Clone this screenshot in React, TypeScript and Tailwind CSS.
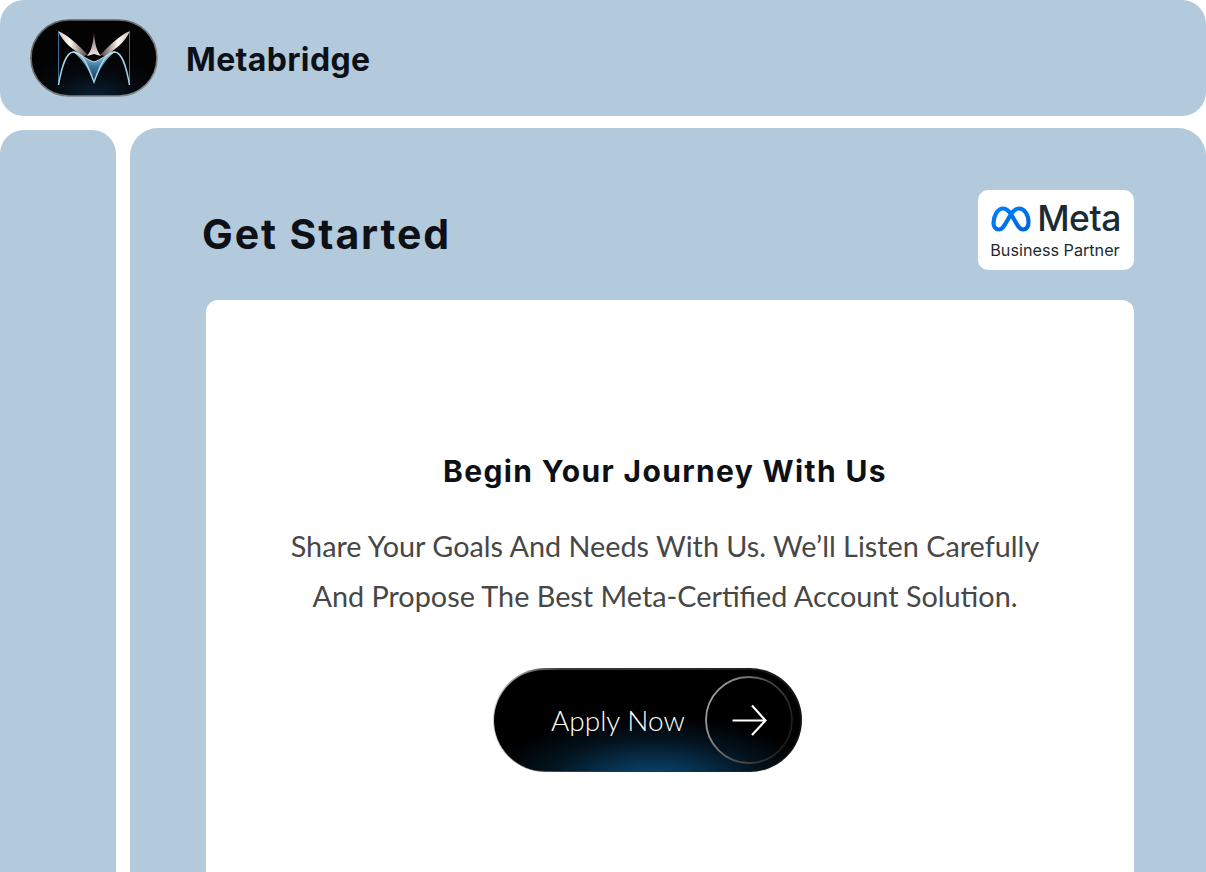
const LogoMark = () => (
  <svg viewBox="0 0 128 78" className="h-[78px] w-[128px]">
    <defs>
      <radialGradient id="logoFill" cx="0.5" cy="1.05" r="0.6">
        <stop offset="0" stopColor="#0b2238" />
        <stop offset="0.6" stopColor="#05090e" />
        <stop offset="1" stopColor="#030304" />
      </radialGradient>
      <linearGradient id="logoRim" x1="0" y1="0" x2="1" y2="1">
        <stop offset="0" stopColor="#5c5c5c" />
        <stop offset="1" stopColor="#858c92" />
      </linearGradient>
      <linearGradient id="wingLeft" x1="0" y1="0" x2="1" y2="0">
        <stop offset="0" stopColor="#cfc4c0" />
        <stop offset="0.4" stopColor="#fff6f0" />
        <stop offset="1" stopColor="#4a3a36" />
      </linearGradient>
      <linearGradient id="wingRight" x1="1" y1="0" x2="0" y2="0">
        <stop offset="0" stopColor="#cfc4c0" />
        <stop offset="0.4" stopColor="#fff6f0" />
        <stop offset="1" stopColor="#4a3a36" />
      </linearGradient>
      <linearGradient id="spike" x1="0" y1="0" x2="0" y2="1">
        <stop offset="0" stopColor="#6f6360" />
        <stop offset="1" stopColor="#f4ece8" />
      </linearGradient>
      <linearGradient id="belly" x1="0" y1="0" x2="0" y2="1">
        <stop offset="0" stopColor="#a6d0e6" />
        <stop offset="0.5" stopColor="#3a7599" />
        <stop offset="1" stopColor="#0f3454" />
      </linearGradient>
      <filter id="soft" x="-20%" y="-20%" width="140%" height="140%">
        <feGaussianBlur stdDeviation="0.7" />
      </filter>
    </defs>
    <rect x="1" y="1" width="126" height="76" rx="38" fill="url(#logoFill)" stroke="url(#logoRim)" strokeWidth="1.6" />
    <path d="M28.500 13 L28.500 66" stroke="#3f7196" strokeWidth="1" fill="none" />
    <path d="M99.500 13 L99.500 66" stroke="#3f7196" strokeWidth="1" fill="none" />
    <g filter="url(#soft)">
      <path d="M28 12 C38 16 48 26 58 36 L53 37 C43 31 33 23 28 12 Z" fill="url(#wingLeft)" />
      <path d="M100 12 C90 16 80 26 70 36 L75 37 C85 31 95 23 100 12 Z" fill="url(#wingRight)" />
      <path d="M64 14 C65 24 66 31 71 37 L64 35 L57 37 C62 31 63 24 64 14 Z" fill="url(#spike)" />
    </g>
    <path d="M43 33 C50 34 57 41 64 43 C71 41 78 34 85 33 C77 38 70 50 64 63 C58 50 51 38 43 33 Z" fill="url(#belly)" />
    <path
      d="M28.500 66 C32 46 36 34 43 33 C51 32 57 44 64 63 C71 44 77 32 85 33 C92 34 96 46 99.500 66"
      stroke="#a9d6ea"
      strokeWidth="1.400"
      fill="none"
    />
    <path d="M43 33 C50 34 57 41 64 43 C71 41 78 34 85 33" stroke="#c9e6f3" strokeWidth="1" fill="none" />
  </svg>
);

const MetaBadge = () => (
  <div className="flex h-[80px] w-[156px] flex-col items-center justify-center rounded-[10px] bg-white">
    <div className="flex items-center gap-[6px]">
      <svg viewBox="0 0 40 26" className="h-[26px] w-[40px]" fill="none">
        <defs>
          <linearGradient id="metaBlue" x1="0" y1="0" x2="1" y2="1">
            <stop offset="0" stopColor="#0082fb" />
            <stop offset="1" stopColor="#0064e0" />
          </linearGradient>
        </defs>
        <path
          d="M2.500 17C2.500 10 6.500 2.500 12 2.500C17 2.500 20 8 24 15C27 20.500 29 23.500 32 23.500C35.500 23.500 37.500 20.500 37.500 16C37.500 9 33.500 2.500 28 2.500C23 2.500 20 8 16 15C13 20.500 11 23.500 8 23.500C4.500 23.500 2.500 21 2.500 17Z"
          stroke="url(#metaBlue)"
          strokeWidth="4.200"
        />
      </svg>
      <span className="text-[35.500px] leading-[34px] font-medium tracking-[-0.5px] text-[#1c2b33]">Meta</span>
    </div>
    <span className="mt-[5px] mr-[2px] text-[16.200px] leading-[18px] text-[#1c2b33]">Business Partner</span>
  </div>
);

const ArrowCircle = () => (
  <svg viewBox="0 0 88 88" className="size-[88px]" fill="none">
    <defs>
      <linearGradient id="ringStroke" x1="0" y1="0.3" x2="1" y2="0.7">
        <stop offset="0" stopColor="#a6a6a6" />
        <stop offset="0.55" stopColor="#4a4a4a" />
        <stop offset="1" stopColor="#181818" />
      </linearGradient>
    </defs>
    <circle cx="44" cy="44" r="43" stroke="url(#ringStroke)" strokeWidth="1.800" />
    <path d="M27.500 44.500H60M47 29.500L60.500 44.500L47 59" stroke="#fff" strokeWidth="2.200" />
  </svg>
);

export default function App() {
  return (
    <div className="flex h-[872px] w-[1206px] flex-col overflow-hidden bg-white font-['Inter',sans-serif] text-[#0d1117]">
      <header className="flex h-[116px] shrink-0 items-center gap-[28px] rounded-[24px] bg-[#b2cadb] pl-[30px]">
        <LogoMark />
        <span className="mt-[4px] text-[32px] font-bold tracking-[0.35px]">Metabridge</span>
      </header>

      <div className="mt-[12px] flex flex-1 gap-[14px]">
        <aside className="mt-[2px] w-[116px] rounded-t-[24px] bg-[#b2cadb]" />

        <main className="flex-1 rounded-t-[28px] bg-[#b2cadb] px-[72px]">
          <div className="flex h-[172px] items-end justify-between pb-[30px]">
            <h1 className="mb-[11px] text-[41px] leading-[50px] font-bold tracking-[1.9px]">Get Started</h1>
            <MetaBadge />
          </div>

          <section className="ml-[4px] flex h-[600px] flex-col items-center rounded-t-[12px] bg-white pt-[150px] pr-[10px]">
            <h2 className="text-[30px] leading-[42px] font-bold tracking-[1.35px]">Begin Your Journey With Us</h2>
            <p className="mt-[29px] text-center font-['Lato',sans-serif] text-[28.800px] leading-[50px] text-[#474747]">
              Share Your Goals And Needs With Us. We’ll Listen Carefully
              <br />
              And Propose The Best Meta-Certified Account Solution.
            </p>
            <button className="mt-[47px] mr-[36px] h-[104px] w-[309px] rounded-full bg-[linear-gradient(90deg,#c8c8c8,#3c3c3c_22%,#262626_70%,#111)] p-[1.500px]">
              <span className="flex h-full w-full items-center justify-between rounded-full bg-[radial-gradient(ellipse_165px_62px_at_52%_108%,#0b4a78,#03131e_65%,#000_100%)] pr-[7px] pl-[57px]">
                <span className="font-['Lato',sans-serif] text-[28px] font-light text-white">Apply Now</span>
                <ArrowCircle />
              </span>
            </button>
          </section>
        </main>
      </div>
    </div>
  );
}
